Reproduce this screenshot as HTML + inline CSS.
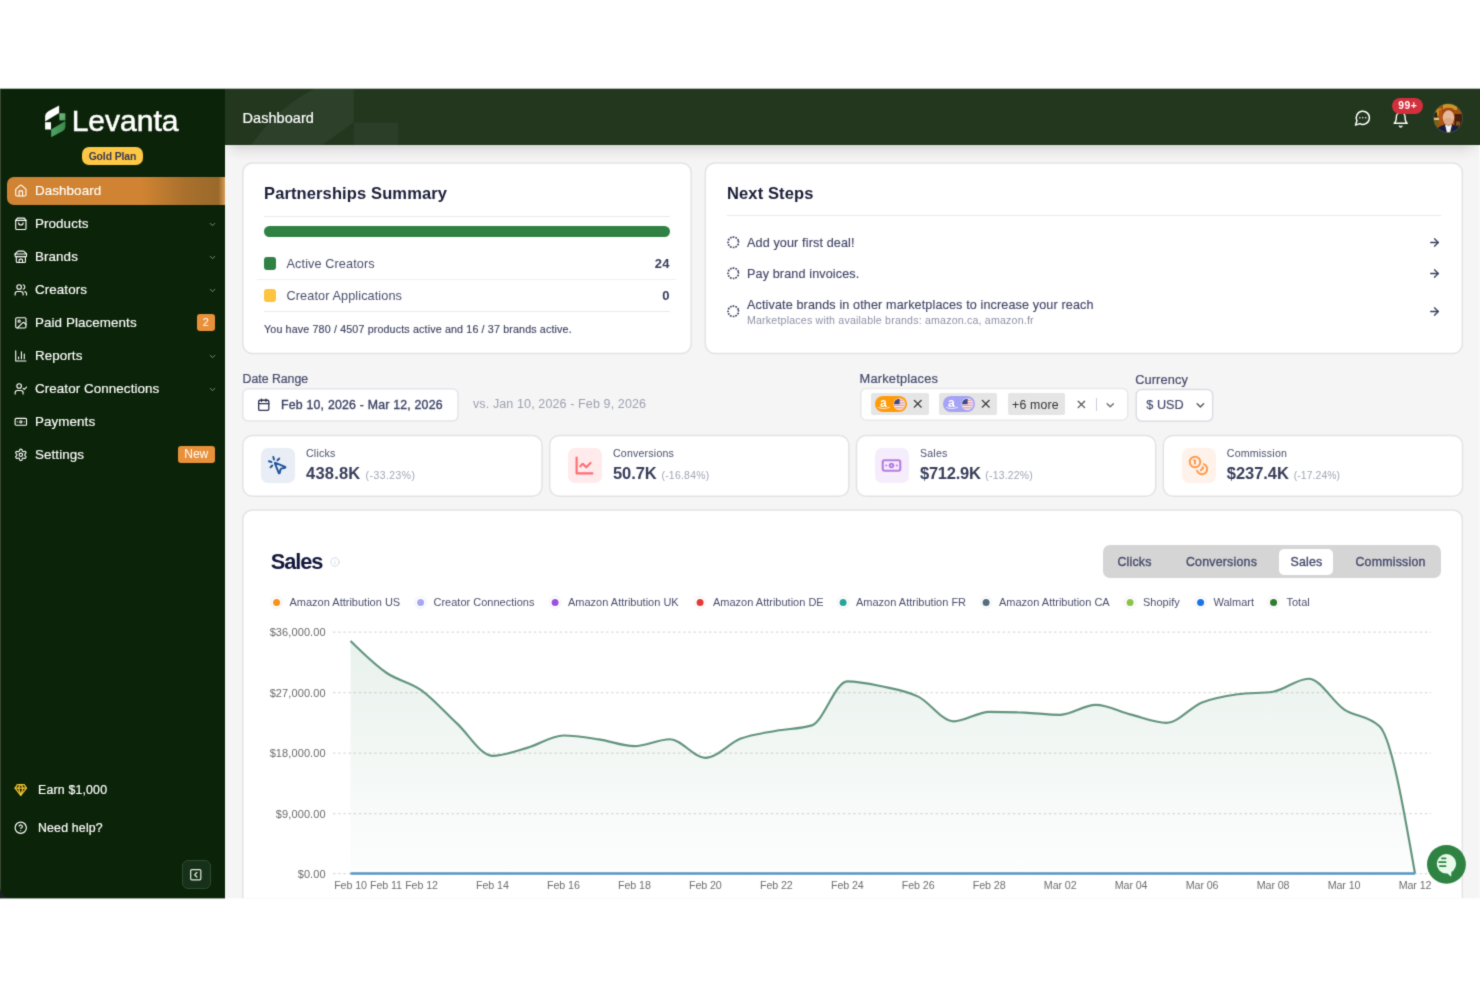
<!DOCTYPE html>
<html lang="en">
<head>
<meta charset="utf-8">
<title>Levanta Dashboard</title>
<style>
*{box-sizing:border-box;margin:0;padding:0}
html,body{width:1480px;height:987px;background:#fff;overflow:hidden}
body{filter:url(#softblur);opacity:.9999;position:relative;font-family:"Liberation Sans",sans-serif;color:#3f4463;-webkit-font-smoothing:antialiased}
.abs{position:absolute}
svg{display:block;overflow:visible}
.ic{fill:none;stroke:currentColor;stroke-width:2;stroke-linecap:round;stroke-linejoin:round}
#app{position:absolute;left:0;top:89px;width:1480px;height:809px;background:#f5f5f5;overflow:hidden}
#layer{position:absolute;left:0;top:-89px;width:1480px;height:987px}
.edge-top{position:absolute;left:0;top:88px;width:1480px;height:1px}
.edge-bot{position:absolute;left:0;top:898px;width:1480px;height:1px}

/* ---------- sidebar ---------- */
#sidebar{position:absolute;left:0;top:89px;width:225px;height:809px;background:#0b2308;border-radius:0 0 0 11px;overflow:hidden}
#sidebar .lb{position:absolute;left:0;top:0;width:1px;height:100%;background:#3a4a33}
.brand{position:absolute;left:71.700px;top:104px;font-size:30px;line-height:34px;color:#fff;-webkit-text-stroke:.550px #fff}
.plan{position:absolute;left:81.600px;top:147.200px;width:61.700px;height:18px;border-radius:7px;background:#fec844;color:#3a3650;font-size:10.400px;font-weight:700;line-height:20.200px;text-align:center;letter-spacing:-.100px}
.nav{position:absolute;left:7px;width:218px;height:28px;color:#fff;font-size:13.400px;line-height:28px}
.nav .ni{position:absolute;left:6.900px;top:6.600px;width:13.700px;height:13.700px;stroke-width:1.950}
.nav .nt{position:absolute;left:28px;top:.400px;white-space:nowrap;-webkit-text-stroke:.150px #fff;letter-spacing:.080px}
.nav .chev{position:absolute;left:201px;top:10px;width:9px;height:9px;color:#9fb09b}
.nav.active .nt{top:-.500px}
.nav.active{background:linear-gradient(90deg,#d08332 0%,#d08332 62%,#a8702c 82%,#9a692b 97%,#d89a52 100%);border-radius:7px 0 0 7px}
.badge{position:absolute;border-radius:3px;background:#e8903a;color:#fff;text-align:center}
.foot{position:absolute;left:38px;color:#fff;font-size:12.300px;line-height:16px;white-space:nowrap;letter-spacing:.200px;-webkit-text-stroke:.200px #fff}

/* ---------- header ---------- */
#header{position:absolute;left:225px;top:89px;width:1255px;height:56px;background:#22371e}
#hshadow{position:absolute;left:225px;top:145px;width:1255px;height:16px;-webkit-mask-image:linear-gradient(90deg,rgba(0,0,0,.25) 0,#000 16px,#000 1236px,rgba(0,0,0,.3) 1253px,rgba(0,0,0,.3) 100%);mask-image:linear-gradient(90deg,rgba(0,0,0,.25) 0,#000 16px,#000 1236px,rgba(0,0,0,.3) 1253px,rgba(0,0,0,.3) 100%);background:linear-gradient(180deg,rgba(0,0,0,.12) 0,rgba(0,0,0,.055) 35%,rgba(0,0,0,.015) 75%,rgba(0,0,0,0) 100%)}
.htitle{position:absolute;left:242.500px;top:108.400px;font-size:14.500px;line-height:20px;color:#fff;white-space:nowrap;-webkit-text-stroke:.200px #fff;letter-spacing:.050px}

.hbadge{position:absolute;left:1392px;top:98px;width:31px;height:16.200px;border-radius:8.100px;background:#d32f3d;color:#fff;font-size:10.300px;font-weight:700;line-height:16.400px;text-align:center;letter-spacing:.450px;text-indent:.450px}
.avatar{position:absolute;left:1434px;top:104px;width:28.500px;height:28.500px;border-radius:50%;overflow:hidden;background:#6b3a12}

/* ---------- cards ---------- */
.card{position:absolute;background:#fff;border:1.500px solid #e6e6e6;border-radius:10px}
.ctitle{position:absolute;font-size:16.500px;font-weight:700;color:#1a1e38;line-height:20px;white-space:nowrap;letter-spacing:.120px}
.hr{position:absolute;height:1.200px;background:#eaeaee}
.t{position:absolute;white-space:nowrap}

/* ---------- filters ---------- */
.lbl{position:absolute;font-size:12.300px;line-height:16px;color:#454a6b;white-space:nowrap;-webkit-text-stroke:.200px #454a6b}
.inp{position:absolute;background:#fff;border:1.500px solid #e4e4e8;border-radius:6px}
.chip{position:absolute;top:393.200px;height:22px;background:#e5e5e5;border-radius:2px}
.pill{position:absolute;left:3.800px;top:2.900px;width:32px;height:16px;border-radius:8px}
/* ---------- stats ---------- */
.sic{position:absolute;top:448.300px;width:34px;height:34.700px;border-radius:7px}
.slab{position:absolute;top:446.300px;font-size:10.600px;line-height:14px;color:#4a4f6d;white-space:nowrap;letter-spacing:.200px}
.sval{position:absolute;top:462.600px;font-size:16.500px;line-height:21px;font-weight:700;color:#383d5a;white-space:nowrap;letter-spacing:.100px}
.sval small{font-size:10.400px;font-weight:400;color:#a2a5b5;letter-spacing:.550px;margin-left:.400px}
/* ---------- chart ---------- */
.tab{position:absolute;top:554px;font-size:12.400px;line-height:16px;color:#454a6b;white-space:nowrap;transform:translateX(-50%);letter-spacing:.200px;-webkit-text-stroke:.350px #454a6b}
.lg{position:absolute;top:595px;font-size:11px;line-height:14px;color:#4a4f6d;white-space:nowrap}
.yl{position:absolute;right:1154.300px;font-size:11px;line-height:14px;color:#696969;white-space:nowrap;letter-spacing:.100px}
.xl{position:absolute;top:878.100px;font-size:10.700px;line-height:14px;color:#6e6e6e;white-space:nowrap;transform:translateX(-50%);letter-spacing:-.100px}
</style>
</head>
<body>
<svg width="0" height="0" style="position:absolute">
<defs>
<filter id="softblur" x="0" y="0" width="100%" height="100%" color-interpolation-filters="sRGB"><feConvolveMatrix order="3" kernelMatrix="0.0196 0.1008 0.0196 0.1008 0.5184 0.1008 0.0196 0.1008 0.0196" divisor="1" edgeMode="duplicate" preserveAlpha="true"/></filter>
<symbol id="i-home" viewBox="0 0 24 24"><path d="M15 21v-8a1 1 0 0 0-1-1h-4a1 1 0 0 0-1 1v8"/><path d="M3 10a2 2 0 0 1 .709-1.528l7-5.999a2 2 0 0 1 2.582 0l7 5.999A2 2 0 0 1 21 10v9a2 2 0 0 1-2 2H5a2 2 0 0 1-2-2z"/></symbol>
<symbol id="i-bag" viewBox="0 0 24 24"><path d="M6 2 3 6v14a2 2 0 0 0 2 2h14a2 2 0 0 0 2-2V6l-3-4Z"/><path d="M3 6h18"/><path d="M16 10a4 4 0 0 1-8 0"/></symbol>
<symbol id="i-store" viewBox="0 0 24 24"><path d="m2 7 4.41-4.41A2 2 0 0 1 7.83 2h8.34a2 2 0 0 1 1.42.59L22 7"/><path d="M4 12v8a2 2 0 0 0 2 2h12a2 2 0 0 0 2-2v-8"/><path d="M15 22v-4a2 2 0 0 0-2-2h-2a2 2 0 0 0-2 2v4"/><path d="M2 7h20"/><path d="M22 7v3a2 2 0 0 1-2 2a2.7 2.7 0 0 1-1.59-.63.7.7 0 0 0-.82 0A2.7 2.7 0 0 1 16 12a2.7 2.7 0 0 1-1.59-.63.7.7 0 0 0-.82 0A2.7 2.7 0 0 1 12 12a2.7 2.7 0 0 1-1.59-.63.7.7 0 0 0-.82 0A2.7 2.7 0 0 1 8 12a2.7 2.7 0 0 1-1.59-.63.7.7 0 0 0-.82 0A2.7 2.7 0 0 1 4 12a2 2 0 0 1-2-2V7"/></symbol>
<symbol id="i-users" viewBox="0 0 24 24"><path d="M16 21v-2a4 4 0 0 0-4-4H6a4 4 0 0 0-4 4v2"/><circle cx="9" cy="7" r="4"/><path d="M22 21v-2a4 4 0 0 0-3-3.87"/><path d="M16 3.13a4 4 0 0 1 0 7.75"/></symbol>
<symbol id="i-image" viewBox="0 0 24 24"><rect width="18" height="18" x="3" y="3" rx="2" ry="2"/><circle cx="9" cy="9" r="2"/><path d="m21 15-3.086-3.086a2 2 0 0 0-2.828 0L6 21"/></symbol>
<symbol id="i-bars" viewBox="0 0 24 24"><path d="M3 3v18h18"/><path d="M18 17V9"/><path d="M13 17V5"/><path d="M8 17v-3"/></symbol>
<symbol id="i-usercheck" viewBox="0 0 24 24"><path d="M16 21v-2a4 4 0 0 0-4-4H6a4 4 0 0 0-4 4v2"/><circle cx="9" cy="7" r="4"/><polyline points="16 11 18 13 22 9"/></symbol>
<symbol id="i-note" viewBox="0 0 24 24"><rect width="20" height="12" x="2" y="6" rx="2"/><circle cx="12" cy="12" r="2"/><path d="M6 12h.01M18 12h.01"/></symbol>
<symbol id="i-gear" viewBox="0 0 24 24"><path d="M12.22 2h-.44a2 2 0 0 0-2 2v.18a2 2 0 0 1-1 1.73l-.43.25a2 2 0 0 1-2 0l-.15-.08a2 2 0 0 0-2.73.73l-.22.38a2 2 0 0 0 .73 2.73l.15.1a2 2 0 0 1 1 1.72v.51a2 2 0 0 1-1 1.74l-.15.09a2 2 0 0 0-.73 2.73l.22.38a2 2 0 0 0 2.73.73l.15-.08a2 2 0 0 1 2 0l.43.25a2 2 0 0 1 1 1.73V20a2 2 0 0 0 2 2h.44a2 2 0 0 0 2-2v-.18a2 2 0 0 1 1-1.73l.43-.25a2 2 0 0 1 2 0l.15.08a2 2 0 0 0 2.73-.73l.22-.39a2 2 0 0 0-.73-2.73l-.15-.08a2 2 0 0 1-1-1.74v-.5a2 2 0 0 1 1-1.74l.15-.09a2 2 0 0 0 .73-2.73l-.22-.38a2 2 0 0 0-2.73-.73l-.15.08a2 2 0 0 1-2 0l-.43-.25a2 2 0 0 1-1-1.73V4a2 2 0 0 0-2-2z"/><circle cx="12" cy="12" r="3"/></symbol>
<symbol id="i-gem" viewBox="0 0 24 24"><path d="M6 3h12l4 6-10 13L2 9Z"/><path d="M11 3 8 9l4 13 4-13-3-6"/><path d="M2 9h20"/></symbol>
<symbol id="i-help" viewBox="0 0 24 24"><circle cx="12" cy="12" r="10"/><path d="M9.09 9a3 3 0 0 1 5.83 1c0 2-3 3-3 3"/><path d="M12 17h.01"/></symbol>
<symbol id="i-collapse" viewBox="0 0 24 24"><rect width="18" height="18" x="3" y="3" rx="2"/><path d="m14 16-4-4 4-4"/></symbol>
<symbol id="i-msg" viewBox="0 0 24 24"><path d="M7.9 20A9 9 0 1 0 4 16.1L2 22Z"/><path d="M8 12h.01"/><path d="M12 12h.01"/><path d="M16 12h.01"/></symbol>
<symbol id="i-bell" viewBox="0 0 24 24"><path d="M6 8a6 6 0 0 1 12 0c0 7 3 9 3 9H3s3-2 3-9"/><path d="M10.3 21a1.94 1.94 0 0 0 3.4 0"/></symbol>
<symbol id="i-cal" viewBox="0 0 24 24"><path d="M8 2v4"/><path d="M16 2v4"/><rect width="18" height="18" x="3" y="4" rx="2"/><path d="M3 10h18"/></symbol>
<symbol id="i-click" viewBox="0 0 24 24"><path d="M14 4.1 12 6"/><path d="m5.1 8-2.9-.8"/><path d="m6 12-1.900 2"/><path d="M7.2 2.2 8 5.1"/><path d="M9.037 9.690a.498.498 0 0 1 .653-.653l11 4.500a.5.5 0 0 1-.074.949l-4.349 1.041a1 1 0 0 0-.740.739l-1.040 4.350a.5.5 0 0 1-.950.074z"/></symbol>
<symbol id="i-line" viewBox="0 0 24 24"><path d="M3 3v18h18"/><path d="m19 9-5 5-4-4-3 3"/></symbol>
<symbol id="i-coins" viewBox="0 0 24 24"><circle cx="8" cy="8" r="6"/><path d="M18.09 10.37A6 6 0 1 1 10.34 18"/><path d="M7 6h1v4"/><path d="m16.71 13.88.7.71-2.82 2.82"/></symbol>
<symbol id="i-arrow" viewBox="0 0 24 24"><path d="M5 12h14"/><path d="m12 5 7 7-7 7"/></symbol>
<symbol id="i-dash" viewBox="0 0 24 24"><circle cx="12" cy="12" r="10" stroke-dasharray="3.100 2.136" stroke-linecap="butt" transform="rotate(-14 12 12)"/></symbol>
<symbol id="i-chev" viewBox="0 0 24 24"><path d="m6 9 6 6 6-6"/></symbol>
<symbol id="i-x" viewBox="0 0 24 24"><path d="M18 6 6 18"/><path d="m6 6 12 12"/></symbol>
<symbol id="i-info" viewBox="0 0 24 24"><circle cx="12" cy="12" r="10"/><path d="M12 16v-4"/><path d="M12 8h.01"/></symbol>
</defs>
</svg>

<div id="app"></div>

<!-- ================= SIDEBAR ================= -->
<div class="abs" style="left:0;top:884px;width:14px;height:14px;background:#1f2027"></div>
<div id="sidebar"><div class="lb"></div></div>
<svg class="abs" style="left:44px;top:104px" width="24" height="35" viewBox="44 104 24 35">
  <defs><linearGradient id="lgc" x1="0" y1="0" x2="1" y2="1"><stop offset="0" stop-color="#74ba83"/><stop offset="1" stop-color="#4f9f63"/></linearGradient>
  <linearGradient id="lgd" x1="0" y1="0" x2="1" y2="0"><stop offset="0" stop-color="#4fa365"/><stop offset="1" stop-color="#3c8a4e"/></linearGradient></defs>
  <path d="M59.100 105.500 L59.100 113.050 L45.100 121.400 L45.100 117 Q45.100 113.200 48.800 111.100 Z" fill="#fff"/>
  <rect x="45.100" y="122.200" width="5.900" height="7.300" fill="#fff"/>
  <rect x="59.400" y="113.300" width="5.950" height="7.050" fill="url(#lgc)"/>
  <path d="M51.200 129.500 L65.350 121.050 L65.350 126.300 Q65.350 129.600 62.300 131.300 L51.200 137.300 Z" fill="url(#lgd)"/>
</svg>
<div class="brand">Levanta</div>
<div class="plan">Gold Plan</div>

<div class="nav active" style="top:177px"><svg class="ni ic"><use href="#i-home"/></svg><span class="nt">Dashboard</span></div>
<div class="nav" style="top:210px"><svg class="ni ic"><use href="#i-bag"/></svg><span class="nt">Products</span><svg class="chev ic"><use href="#i-chev"/></svg></div>
<div class="nav" style="top:243px"><svg class="ni ic"><use href="#i-store"/></svg><span class="nt">Brands</span><svg class="chev ic"><use href="#i-chev"/></svg></div>
<div class="nav" style="top:276px"><svg class="ni ic"><use href="#i-users"/></svg><span class="nt">Creators</span><svg class="chev ic"><use href="#i-chev"/></svg></div>
<div class="nav" style="top:309px"><svg class="ni ic"><use href="#i-image"/></svg><span class="nt">Paid Placements</span></div>
<div class="nav" style="top:342px"><svg class="ni ic"><use href="#i-bars"/></svg><span class="nt">Reports</span><svg class="chev ic"><use href="#i-chev"/></svg></div>
<div class="nav" style="top:375px"><svg class="ni ic"><use href="#i-usercheck"/></svg><span class="nt">Creator Connections</span><svg class="chev ic"><use href="#i-chev"/></svg></div>
<div class="nav" style="top:408px"><svg class="ni ic"><use href="#i-note"/></svg><span class="nt">Payments</span></div>
<div class="nav" style="top:441px"><svg class="ni ic"><use href="#i-gear"/></svg><span class="nt">Settings</span></div>
<div class="badge" style="left:197px;top:314px;width:17.500px;height:17px;font-size:11px;line-height:17px">2</div>
<div class="badge" style="left:178px;top:445.500px;width:36.500px;height:17px;font-size:12px;line-height:17px">New</div>

<svg class="abs ic" style="left:13.800px;top:782.800px;color:#f2c230;stroke-width:2.300" width="13.500" height="13.500"><use href="#i-gem"/></svg>
<div class="foot" style="top:781.800px">Earn $1,000</div>
<svg class="abs ic" style="left:13.800px;top:820.800px;color:#fff;stroke-width:2.100" width="13.500" height="13.500"><use href="#i-help"/></svg>
<div class="foot" style="top:819.800px">Need help?</div>
<div class="abs" style="left:181.500px;top:860px;width:29px;height:29px;border-radius:6px;background:#17301a;border:1px solid #2c4a2e"></div>
<svg class="abs ic" style="left:189.300px;top:868px;color:#dfe8dc;stroke-width:2.200" width="13.500" height="13.500"><use href="#i-collapse"/></svg>

<!-- ================= HEADER ================= -->
<div id="header">
  <svg class="abs" style="left:0;top:0" width="1255" height="56" viewBox="225 89 1255 56">
    <path d="M251.400 145 Q277 107,314.500 89 L353.700 89 L353.700 122.500 L322.300 145 Z" fill="#2c402a"/>
    <rect x="353.700" y="122.500" width="44.600" height="22.500" fill="#2a3e28"/>
  </svg>
</div>
<div id="hshadow"></div>
<div class="abs" style="left:1478.800px;top:145px;width:1.200px;height:753px;background:#fafafa"></div>
<div class="htitle">Dashboard</div>
<svg class="abs" style="left:0;top:0" width="1480" height="987" viewBox="0 0 1480 987">
  <rect x="242.80" y="163.05" width="448.35" height="190.40" rx="9.5" fill="#fff" stroke="#e3e3e3" stroke-width="1.5"/>
  <rect x="705.35" y="163.05" width="757.00" height="190.40" rx="9.5" fill="#fff" stroke="#e3e3e3" stroke-width="1.5"/>
  <rect x="242.80" y="435.45" width="299.20" height="60.80" rx="9.5" fill="#fff" stroke="#e3e3e3" stroke-width="1.5"/>
  <rect x="549.65" y="435.45" width="299.20" height="60.80" rx="9.5" fill="#fff" stroke="#e3e3e3" stroke-width="1.5"/>
  <rect x="856.50" y="435.45" width="299.20" height="60.80" rx="9.5" fill="#fff" stroke="#e3e3e3" stroke-width="1.5"/>
  <rect x="1163.35" y="435.45" width="299.20" height="60.80" rx="9.5" fill="#fff" stroke="#e3e3e3" stroke-width="1.5"/>
  <rect x="242.80" y="509.90" width="1219.55" height="429.35" rx="9.5" fill="#fff" stroke="#e3e3e3" stroke-width="1.5"/>
  <rect x="242.80" y="388.85" width="215.20" height="32.20" rx="5.5" fill="#fff" stroke="#e4e4ec" stroke-width="1.5"/>
  <rect x="860.80" y="388.55" width="266.95" height="31.60" rx="5.5" fill="#fff" stroke="#e9e9ec" stroke-width="1.5"/>
  <rect x="1136.25" y="389.45" width="76.40" height="31.80" rx="5.5" fill="#fff" stroke="#dcdce6" stroke-width="1.5"/>
</svg>

<svg class="abs ic" style="left:1353.700px;top:109.300px;color:#fff;stroke-width:2" width="17.600" height="17.600"><use href="#i-msg"/></svg>
<svg class="abs ic" style="left:1391.800px;top:111.200px;color:#fff;stroke-width:2" width="17.400" height="17.400"><use href="#i-bell"/></svg>
<div class="hbadge">99+</div>
<svg class="abs" style="left:1428px;top:98px" width="40" height="40" viewBox="0 0 40 40">
  <defs><clipPath id="avc"><circle cx="20.100" cy="20.200" r="14.100"/></clipPath>
  <filter id="avb" x="-10%" y="-10%" width="120%" height="120%"><feGaussianBlur stdDeviation=".550"/></filter></defs>
  <circle cx="20.100" cy="20.200" r="14.700" fill="#46614d"/>
  <g clip-path="url(#avc)"><g filter="url(#avb)">
    <rect x="4" y="4" width="33" height="33" fill="#a5510f"/>
    <rect x="15" y="5" width="14" height="7" fill="#cf9420"/>
    <rect x="7.500" y="10.500" width="6" height="7" fill="#d08a18"/>
    <rect x="26.500" y="16" width="9" height="13" fill="#4a1c0d"/>
    <rect x="28" y="23.500" width="4" height="4" fill="#7a5a22"/>
    <rect x="5" y="14.500" width="4" height="5" fill="#1e2412"/>
    <rect x="6" y="19.800" width="5" height="2.200" fill="#cfc990"/>
    <rect x="7.500" y="22.500" width="3" height="4.500" fill="#6d6a1a"/>
    <rect x="11" y="12" width="3.500" height="14" fill="#b35512"/>
    <ellipse cx="20.500" cy="13.300" rx="6.300" ry="3.600" fill="#9c4a18"/>
    <ellipse cx="20.500" cy="19.600" rx="5.800" ry="7.300" fill="#e7b89c"/>
    <ellipse cx="20.500" cy="23.500" rx="4.600" ry="3.400" fill="#dca888"/>
    <path d="M9 31 C11 28.500,15 27.500,17.200 26.300 L20.500 29 L23.800 26.300 C26 27.500,30 28.500,32 31 L32 36 L9 36Z" fill="#151b44"/>
    <path d="M17 26.600 L20.500 27.800 L24 26.600 L22 35 L19 35Z" fill="#f4f1ee"/>
  </g></g>
</svg>

<!-- ================= PARTNERSHIPS SUMMARY ================= -->
<div class="ctitle" style="left:264px;top:183px">Partnerships Summary</div>
<div class="hr" style="left:264px;top:215.500px;width:405.500px"></div>
<div class="abs" style="left:264px;top:226.450px;width:405.500px;height:11px;border-radius:5.500px;background:#2f8144"></div>
<div class="abs" style="left:264px;top:257px;width:12px;height:12.500px;border-radius:3px;background:#2f8144"></div>
<div class="t" style="left:286.500px;top:255.700px;font-size:12.700px;line-height:16px;color:#4a4f6d;letter-spacing:.100px">Active Creators</div>
<div class="t" style="right:810.500px;top:255.700px;font-size:13px;line-height:16px;color:#363b59;font-weight:700;letter-spacing:.300px;margin-right:-.300px">24</div>
<div class="hr" style="left:257px;top:278.900px;width:419px;height:1px;background:#f0f0f3"></div>
<div class="abs" style="left:264px;top:289px;width:12px;height:12.500px;border-radius:3px;background:#fcc43f"></div>
<div class="t" style="left:286.500px;top:287.700px;font-size:12.700px;line-height:16px;color:#4a4f6d;letter-spacing:.100px">Creator Applications</div>
<div class="t" style="right:810.500px;top:287.700px;font-size:13px;line-height:16px;color:#363b59;font-weight:700;letter-spacing:.300px;margin-right:-.300px">0</div>
<div class="hr" style="left:264px;top:310.500px;width:405.500px"></div>
<div class="t" style="left:264px;top:321.500px;font-size:10.700px;line-height:14px;color:#3f4463;letter-spacing:.150px;-webkit-text-stroke:.150px #3f4463">You have 780 / 4507 products active and 16 / 37 brands active.</div>

<!-- ================= NEXT STEPS ================= -->
<div class="ctitle" style="left:727px;top:183px">Next Steps</div>
<div class="hr" style="left:727px;top:215px;width:713.500px"></div>
<svg class="abs ic" style="left:726.500px;top:236px;color:#3a3f5e;stroke-width:3.300" width="12.600" height="12.600"><use href="#i-dash"/></svg>
<div class="t" style="left:747px;top:234.500px;font-size:12.600px;line-height:16px;color:#434867;letter-spacing:.130px;-webkit-text-stroke:.150px #434867">Add your first deal!</div>
<svg class="abs ic" style="left:1428.200px;top:235.900px;color:#3a3f5e;stroke-width:2.400" width="13" height="13"><use href="#i-arrow"/></svg>
<svg class="abs ic" style="left:726.500px;top:267px;color:#3a3f5e;stroke-width:3.300" width="12.600" height="12.600"><use href="#i-dash"/></svg>
<div class="t" style="left:747px;top:265.500px;font-size:12.600px;line-height:16px;color:#434867;letter-spacing:.130px;-webkit-text-stroke:.150px #434867">Pay brand invoices.</div>
<svg class="abs ic" style="left:1428.200px;top:267px;color:#3a3f5e;stroke-width:2.400" width="13" height="13"><use href="#i-arrow"/></svg>
<svg class="abs ic" style="left:726.500px;top:305px;color:#3a3f5e;stroke-width:3.300" width="12.600" height="12.600"><use href="#i-dash"/></svg>
<div class="t" style="left:747px;top:297px;font-size:12.600px;line-height:16px;color:#434867;letter-spacing:.130px;-webkit-text-stroke:.150px #434867">Activate brands in other marketplaces to increase your reach</div>
<div class="t" style="left:747px;top:314px;font-size:10.600px;line-height:13px;color:#8e91a6;letter-spacing:.200px">Marketplaces with available brands: amazon.ca, amazon.fr</div>
<svg class="abs ic" style="left:1428.200px;top:305px;color:#3a3f5e;stroke-width:2.400" width="13" height="13"><use href="#i-arrow"/></svg>

<!-- ================= FILTERS ================= -->
<div class="lbl" style="left:242.500px;top:370.800px">Date Range</div>
<svg class="abs ic" style="left:257.300px;top:397.800px;color:#2c3150;stroke-width:2.300" width="13.500" height="13.500"><use href="#i-cal"/></svg>
<div class="t" style="left:281px;top:397px;font-size:12.300px;line-height:16px;color:#3b4163;-webkit-text-stroke:.350px #3b4163;letter-spacing:.220px">Feb 10, 2026 - Mar 12, 2026</div>
<div class="t" style="left:473px;top:395.500px;font-size:12.500px;line-height:16px;color:#9da0b2;letter-spacing:.120px">vs. Jan 10, 2026 - Feb 9, 2026</div>

<div class="lbl" style="left:859.600px;top:370.600px;font-size:12.800px;letter-spacing:.200px">Marketplaces</div>
<div class="chip" style="left:871.100px;width:58px"><div class="pill" style="background:#ff9b0b">
  <svg width="32" height="16" viewBox="0 0 32 16">
    <text x="5.100" y="10.700" font-family="Liberation Sans" font-size="12.200" font-weight="700" fill="#fff">a</text>
    <path d="M3.400 11.500 C6.500 13.100,10.500 13,14.600 11.300" stroke="#fff" stroke-width=".800" fill="none" stroke-linecap="round" opacity=".900"/>
    <clipPath id="fcp0"><circle cx="24.400" cy="8.100" r="5.400"/></clipPath>
    <circle cx="24.400" cy="8.100" r="6.100" fill="#fff" opacity=".550"/>
    <g clip-path="url(#fcp0)">
      <rect x="18" y="2" width="14" height="13" fill="#f6eef0"/>
      <rect x="18" y="3.700" width="14" height="1.250" fill="#e79aa2"/><rect x="18" y="6.200" width="14" height="1.250" fill="#e79aa2"/>
      <rect x="18" y="8.700" width="14" height="1.250" fill="#e79aa2"/><rect x="18" y="11.200" width="14" height="1.250" fill="#e79aa2"/>
      <rect x="18" y="2" width="6.600" height="6.200" fill="#3b4a86"/>
    </g>
  </svg></div><svg class="abs ic" style="left:39.500px;top:3.900px;color:#333;stroke-width:2.500" width="13.500" height="13.500"><use href="#i-x"/></svg></div>
<div class="chip" style="left:939px;width:57.500px"><div class="pill" style="background:#a5a3f5">
  <svg width="32" height="16" viewBox="0 0 32 16">
    <text x="5.100" y="10.700" font-family="Liberation Sans" font-size="12.200" font-weight="700" fill="#fff">a</text>
    <path d="M3.400 11.500 C6.500 13.100,10.500 13,14.600 11.300" stroke="#fff" stroke-width=".800" fill="none" stroke-linecap="round" opacity=".900"/>
    <clipPath id="fcp1"><circle cx="24.400" cy="8.100" r="5.400"/></clipPath>
    <circle cx="24.400" cy="8.100" r="6.100" fill="#fff" opacity=".550"/>
    <g clip-path="url(#fcp1)">
      <rect x="18" y="2" width="14" height="13" fill="#f6eef0"/>
      <rect x="18" y="3.700" width="14" height="1.250" fill="#e79aa2"/><rect x="18" y="6.200" width="14" height="1.250" fill="#e79aa2"/>
      <rect x="18" y="8.700" width="14" height="1.250" fill="#e79aa2"/><rect x="18" y="11.200" width="14" height="1.250" fill="#e79aa2"/>
      <rect x="18" y="2" width="6.600" height="6.200" fill="#3b4a86"/>
    </g>
  </svg></div><svg class="abs ic" style="left:39.500px;top:3.900px;color:#333;stroke-width:2.500" width="13.500" height="13.500"><use href="#i-x"/></svg></div>
<div class="chip" style="left:1007.500px;width:57px"><div class="t" style="left:4.500px;top:3.800px;font-size:12.300px;line-height:16px;color:#333;letter-spacing:.200px">+6 more</div></div>
<svg class="abs ic" style="left:1075px;top:398.200px;color:#555;stroke-width:2.400" width="12.800" height="12.800"><use href="#i-x"/></svg>
<div class="abs" style="left:1095.500px;top:397.500px;width:1px;height:13.500px;background:#c9cbe0"></div>
<svg class="abs ic" style="left:1103.800px;top:398.500px;color:#666;stroke-width:2.400" width="12.500" height="12.500"><use href="#i-chev"/></svg>

<div class="lbl" style="left:1135.200px;top:371.800px;font-size:12.800px;letter-spacing:.100px">Currency</div>
<div class="t" style="left:1146.300px;top:397.300px;font-size:12.700px;line-height:16px;color:#454a6b;-webkit-text-stroke:.150px #454a6b">$ USD</div>
<svg class="abs ic" style="left:1193.800px;top:398.900px;color:#555;stroke-width:2.600" width="12.800" height="12.800"><use href="#i-chev"/></svg>

<!-- ================= STAT CARDS ================= -->

<div class="sic" style="left:260.500px;background:#e8edf6"></div>
<svg class="abs ic" style="left:267.100px;top:455.100px;color:#1f5599;stroke-width:2.250" width="21" height="21"><use href="#i-click"/></svg>
<div class="slab" style="left:306px">Clicks</div>
<div class="sval" style="left:306px;letter-spacing:.200px">438.8K <small style="letter-spacing:.460px">(-33.23%)</small></div>

<div class="sic" style="left:567.500px;background:#ffeaec"></div>
<svg class="abs ic" style="left:574.050px;top:455.050px;color:#ff6b71;stroke-width:2.400" width="21" height="21"><use href="#i-line"/></svg>
<div class="slab" style="left:613px">Conversions</div>
<div class="sval" style="left:613px;letter-spacing:-.100px">50.7K <small style="letter-spacing:.270px">(-16.84%)</small></div>

<div class="sic" style="left:874.500px;background:#f5edfc"></div>
<svg class="abs ic" style="left:881px;top:455px;color:#b67ce2;stroke-width:2.400" width="21" height="21"><use href="#i-note"/></svg>
<div class="slab" style="left:920px">Sales</div>
<div class="sval" style="left:920px;letter-spacing:-.250px">$712.9K <small style="letter-spacing:.220px">(-13.22%)</small></div>

<div class="sic" style="left:1181.500px;background:#fff2ea"></div>
<svg class="abs ic" style="left:1188px;top:455.100px;color:#ff9a4e;stroke-width:2.300" width="21" height="21"><use href="#i-coins"/></svg>
<div class="slab" style="left:1226.800px">Commission</div>
<div class="sval" style="left:1226.800px;letter-spacing:-.050px">$237.4K <small style="letter-spacing:.080px">(-17.24%)</small></div>

<!-- ================= CHART ================= -->
<div class="t" style="left:270.800px;top:548.300px;font-size:21.800px;line-height:28px;font-weight:700;color:#12163a;letter-spacing:-1.100px">Sales</div>
<svg class="abs ic" style="left:329.700px;top:557.400px;color:#cfd2df;stroke-width:2" width="10" height="10"><use href="#i-info"/></svg>
<div class="abs" style="left:1103px;top:545px;width:338px;height:32.800px;border-radius:7px;background:#d5d5d5"></div>
<div class="abs" style="left:1279.300px;top:549px;width:53.800px;height:25.500px;border-radius:5px;background:#fff"></div>
<div class="tab" style="left:1134.500px">Clicks</div>
<div class="tab" style="left:1221.500px">Conversions</div>
<div class="tab" style="left:1306.500px">Sales</div>
<div class="tab" style="left:1390.500px">Commission</div>
<div class="lg" style="left:289.5px">Amazon Attribution US</div>
<div class="lg" style="left:433.5px">Creator Connections</div>
<div class="lg" style="left:568px">Amazon Attribution UK</div>
<div class="lg" style="left:713px">Amazon Attribution DE</div>
<div class="lg" style="left:856px">Amazon Attribution FR</div>
<div class="lg" style="left:999px">Amazon Attribution CA</div>
<div class="lg" style="left:1143px">Shopify</div>
<div class="lg" style="left:1213.5px">Walmart</div>
<div class="lg" style="left:1286.5px">Total</div>

<div class="yl" style="top:625.3px">$36,000.00</div>
<div class="yl" style="top:685.8px">$27,000.00</div>
<div class="yl" style="top:746.3px">$18,000.00</div>
<div class="yl" style="top:806.8px">$9,000.00</div>
<div class="yl" style="top:866.8px">$0.00</div>

<div class="xl" style="left:350.5px">Feb 10</div>
<div class="xl" style="left:386.0px">Feb 11</div>
<div class="xl" style="left:421.5px">Feb 12</div>
<div class="xl" style="left:492.4px">Feb 14</div>
<div class="xl" style="left:563.4px">Feb 16</div>
<div class="xl" style="left:634.4px">Feb 18</div>
<div class="xl" style="left:705.3px">Feb 20</div>
<div class="xl" style="left:776.3px">Feb 22</div>
<div class="xl" style="left:847.3px">Feb 24</div>
<div class="xl" style="left:918.2px">Feb 26</div>
<div class="xl" style="left:989.2px">Feb 28</div>
<div class="xl" style="left:1060.2px">Mar 02</div>
<div class="xl" style="left:1131.1px">Mar 04</div>
<div class="xl" style="left:1202.1px">Mar 06</div>
<div class="xl" style="left:1273.1px">Mar 08</div>
<div class="xl" style="left:1344.0px">Mar 10</div>
<div class="xl" style="left:1415.0px">Mar 12</div>

<svg class="abs" style="left:0;top:0;pointer-events:none" width="1480" height="987" viewBox="0 0 1480 987">
  <defs><linearGradient id="ag" x1="0" y1="640" x2="0" y2="874" gradientUnits="userSpaceOnUse"><stop offset="0" stop-color="#4f9470" stop-opacity=".125"/><stop offset="1" stop-color="#4f9470" stop-opacity=".015"/></linearGradient></defs>
  <circle cx="276.6" cy="602.400" r="5.800" fill="#fff" stroke="#ededf6" stroke-width=".900"/><circle cx="276.6" cy="602.400" r="3.500" fill="#f7931e"/><circle cx="420.6" cy="602.400" r="5.800" fill="#fff" stroke="#ededf6" stroke-width=".900"/><circle cx="420.6" cy="602.400" r="3.500" fill="#a5a6f6"/><circle cx="555.1" cy="602.400" r="5.800" fill="#fff" stroke="#ededf6" stroke-width=".900"/><circle cx="555.1" cy="602.400" r="3.500" fill="#9b51e0"/><circle cx="700.1" cy="602.400" r="5.800" fill="#fff" stroke="#ededf6" stroke-width=".900"/><circle cx="700.1" cy="602.400" r="3.500" fill="#e53935"/><circle cx="843.1" cy="602.400" r="5.800" fill="#fff" stroke="#ededf6" stroke-width=".900"/><circle cx="843.1" cy="602.400" r="3.500" fill="#26a69a"/><circle cx="986.1" cy="602.400" r="5.800" fill="#fff" stroke="#ededf6" stroke-width=".900"/><circle cx="986.1" cy="602.400" r="3.500" fill="#546e7a"/><circle cx="1130.1" cy="602.400" r="5.800" fill="#fff" stroke="#ededf6" stroke-width=".900"/><circle cx="1130.1" cy="602.400" r="3.500" fill="#8bc34a"/><circle cx="1200.6" cy="602.400" r="5.800" fill="#fff" stroke="#ededf6" stroke-width=".900"/><circle cx="1200.6" cy="602.400" r="3.500" fill="#1a73e8"/><circle cx="1273.6" cy="602.400" r="5.800" fill="#fff" stroke="#ededf6" stroke-width=".900"/><circle cx="1273.6" cy="602.400" r="3.500" fill="#2e7d32"/>
  <g stroke="#dcdcdc" stroke-width="1.250" stroke-dasharray="2.500 2.650"><line x1="333" x2="1431" y1="632" y2="632"/><line x1="333" x2="1431" y1="692.5" y2="692.5"/><line x1="333" x2="1431" y1="753" y2="753"/><line x1="333" x2="1431" y1="813.5" y2="813.5"/><line x1="333" x2="1431" y1="873.5" y2="873.5"/></g>
  <path d="M350.5,641.0C362.3,652.6,374.2,664.3,386.0,672.5C397.8,680.7,409.6,681.8,421.5,690.3C433.3,698.8,445.1,712.5,456.9,723.4C468.8,734.3,480.6,755.8,492.4,755.8C504.3,755.8,516.1,751.0,527.9,747.6C539.7,744.2,551.6,735.5,563.4,735.5C575.2,735.5,587.1,737.6,598.9,739.4C610.7,741.2,622.5,746.1,634.4,746.1C646.2,746.1,658.0,739.2,669.9,739.2C681.7,739.2,693.5,757.8,705.3,757.8C717.2,757.8,729.0,743.1,740.8,738.6C752.6,734.1,764.5,733.0,776.3,730.8C788.1,728.6,800.0,729.0,811.8,725.4C823.6,721.8,835.4,681.3,847.3,681.3C859.1,681.3,870.9,684.0,882.8,686.5C894.6,689.0,906.4,690.8,918.2,696.6C930.1,702.4,941.9,721.3,953.7,721.3C965.5,721.3,977.4,711.8,989.2,711.8C1001.0,711.8,1012.9,712.1,1024.7,712.6C1036.5,713.1,1048.3,714.8,1060.2,714.8C1072.0,714.8,1083.8,704.9,1095.7,704.9C1107.5,704.9,1119.3,711.6,1131.1,714.6C1143.0,717.6,1154.8,722.8,1166.6,722.8C1178.4,722.8,1190.3,707.2,1202.1,702.5C1213.9,697.8,1225.8,696.0,1237.6,694.3C1249.4,692.6,1261.2,693.4,1273.1,691.7C1284.9,690.0,1296.7,678.7,1308.5,678.7C1320.4,678.7,1332.2,701.4,1344.0,709.3C1355.9,717.2,1367.7,715.0,1379.5,726.3C1391.3,737.6,1403.2,805.6,1415.0,873.5L1415.0,873.5L350.5,873.5Z" fill="url(#ag)"/>
  <path d="M350.5,641.0C362.3,652.6,374.2,664.3,386.0,672.5C397.8,680.7,409.6,681.8,421.5,690.3C433.3,698.8,445.1,712.5,456.9,723.4C468.8,734.3,480.6,755.8,492.4,755.8C504.3,755.8,516.1,751.0,527.9,747.6C539.7,744.2,551.6,735.5,563.4,735.5C575.2,735.5,587.1,737.6,598.9,739.4C610.7,741.2,622.5,746.1,634.4,746.1C646.2,746.1,658.0,739.2,669.9,739.2C681.7,739.2,693.5,757.8,705.3,757.8C717.2,757.8,729.0,743.1,740.8,738.6C752.6,734.1,764.5,733.0,776.3,730.8C788.1,728.6,800.0,729.0,811.8,725.4C823.6,721.8,835.4,681.3,847.3,681.3C859.1,681.3,870.9,684.0,882.8,686.5C894.6,689.0,906.4,690.8,918.2,696.6C930.1,702.4,941.9,721.3,953.7,721.3C965.5,721.3,977.4,711.8,989.2,711.8C1001.0,711.8,1012.9,712.1,1024.7,712.6C1036.5,713.1,1048.3,714.8,1060.2,714.8C1072.0,714.8,1083.8,704.9,1095.7,704.9C1107.5,704.9,1119.3,711.6,1131.1,714.6C1143.0,717.6,1154.8,722.8,1166.6,722.8C1178.4,722.8,1190.3,707.2,1202.1,702.5C1213.9,697.8,1225.8,696.0,1237.6,694.3C1249.4,692.6,1261.2,693.4,1273.1,691.7C1284.9,690.0,1296.7,678.7,1308.5,678.7C1320.4,678.7,1332.2,701.4,1344.0,709.3C1355.9,717.2,1367.7,715.0,1379.5,726.3C1391.3,737.6,1403.2,805.6,1415.0,873.5" fill="none" stroke="#62947e" stroke-width="2.150" stroke-linejoin="round"/>
  <line x1="350.500" x2="1415" y1="873.500" y2="873.500" stroke="#5794c4" stroke-width="2.300"/>
  <circle cx="1446.450" cy="864.350" r="19.450" fill="#2f8342"/>
  <circle cx="1446.450" cy="863.800" r="9.700" fill="#e8fbea"/>
  <path d="M1447.200 873.300 L1451.500 871.600 L1451.100 876.700 Z" fill="#e8fbea"/>
  <g stroke="#2f8342" stroke-width="1.700" stroke-linecap="round"><line x1="1441.900" x2="1445.600" y1="858.400" y2="858.400"/><line x1="1439.200" x2="1445.600" y1="862.200" y2="862.200"/><line x1="1439.800" x2="1445.600" y1="866.100" y2="866.100"/></g>
</svg>
<div class="edge-top" style="background:rgba(11,35,8,.3)"></div>
<div class="abs" style="left:0;top:898px;width:1480px;height:89px;background:#fff"></div>
<div class="abs" style="left:0;top:898px;width:225px;height:1px;background:rgba(11,35,8,.4)"></div>
<div class="abs" style="left:225px;top:898px;width:1255px;height:1px;background:rgba(245,245,245,.4)"></div>

</body>
</html>
